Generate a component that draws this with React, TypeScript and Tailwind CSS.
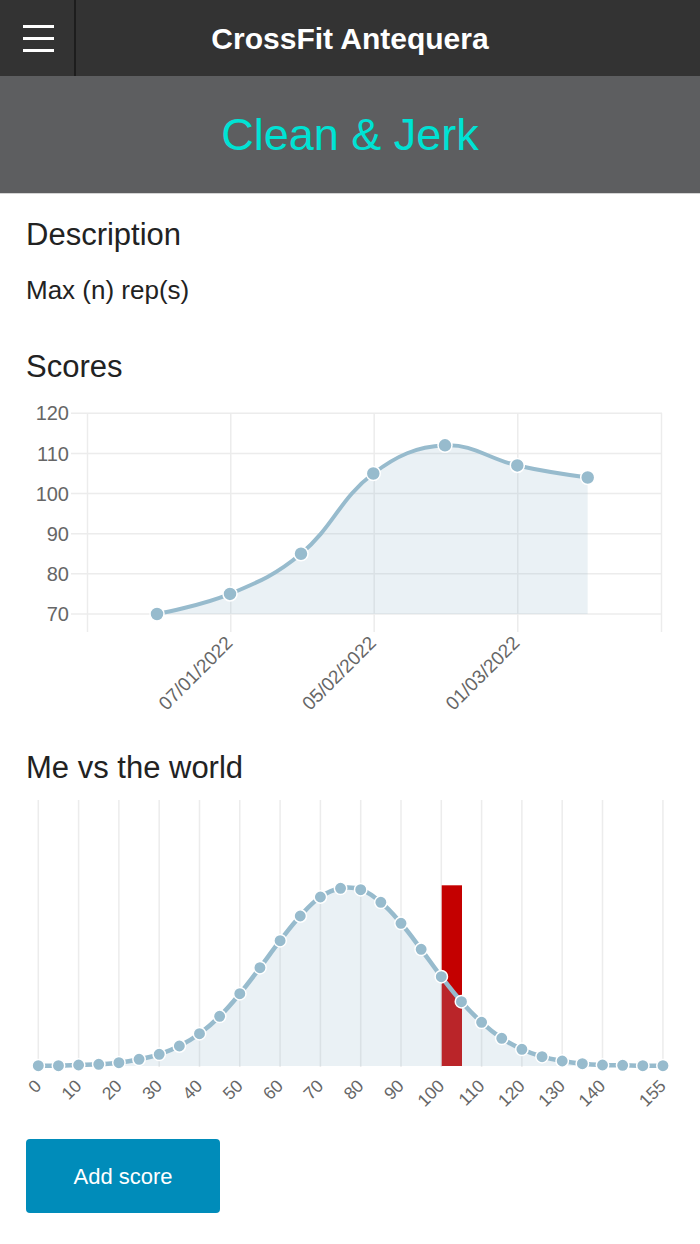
import React from "react";

type P = [number, number];

function splinePath(points: P[], t = 0.4, minY = 0, maxY = 10000): string {
  const cps = points.map((p, i) => {
    if (i === 0 || i === points.length - 1) return { a: p, b: p };
    const p0 = points[i - 1];
    const p2 = points[i + 1];
    const d01 = Math.hypot(p[0] - p0[0], p[1] - p0[1]);
    const d12 = Math.hypot(p2[0] - p[0], p2[1] - p[1]);
    const fa = (t * d01) / (d01 + d12);
    const fb = (t * d12) / (d01 + d12);
    const cy = (y: number) => Math.min(maxY, Math.max(minY, y));
    return {
      a: [p[0] - fa * (p2[0] - p0[0]), cy(p[1] - fa * (p2[1] - p0[1]))] as P,
      b: [p[0] + fb * (p2[0] - p0[0]), cy(p[1] + fb * (p2[1] - p0[1]))] as P,
    };
  });
  let d = `M${points[0][0]},${points[0][1]}`;
  for (let i = 1; i < points.length; i++) {
    const c1 = cps[i - 1].b;
    const c2 = cps[i].a;
    const p = points[i];
    d += ` C${c1[0]},${c1[1]} ${c2[0]},${c2[1]} ${p[0]},${p[1]}`;
  }
  return d;
}

const LINE = "#97bbcd";
const FILL = "rgba(151,187,205,0.2)";
const GRID = "#ececec";
const FONT = "'Liberation Sans', Arial, sans-serif";

function ScoresChart() {
  const y = (v: number) => 614 - (v - 70) * 4.015;
  const vals = [70, 75, 85, 105, 112, 107, 104];
  const xs = [157, 230, 301, 373.3, 445, 517.3, 587.7];
  const pts: P[] = vals.map((v, i) => [xs[i], y(v)]);
  const line = splinePath(pts, 0.4, 413, 614);
  const area = `${line} L${pts[pts.length - 1][0]},614 L${pts[0][0]},614 Z`;
  const yTicks = [120, 110, 100, 90, 80, 70];
  const xGrid = [87.5, 230.8, 374.2, 517.8, 661.5];
  const xLabels: [number, string][] = [
    [230.8, "07/01/2022"],
    [374.2, "05/02/2022"],
    [517.8, "01/03/2022"],
  ];
  return (
    <svg width={700} height={365} viewBox="0 385 700 365" className="block">
      {yTicks.map((v) => (
        <line key={v} x1={71} x2={662} y1={y(v)} y2={y(v)} stroke={GRID} strokeWidth={1.5} />
      ))}
      {xGrid.map((x) => (
        <line key={x} x1={x} x2={x} y1={413} y2={632} stroke={GRID} strokeWidth={1.5} />
      ))}
      {yTicks.map((v) => (
        <text
          key={v}
          x={69}
          y={y(v)}
          dy="0.36em"
          textAnchor="end"
          fontFamily={FONT}
          fontSize={20}
          fill="#666"
        >
          {v}
        </text>
      ))}
      {xLabels.map(([x, s]) => (
        <text
          key={s}
          transform={`translate(${x + 3},644) rotate(-45)`}
          textAnchor="end"
          fontFamily={FONT}
          fontSize={19}
          fill="#666"
        >
          {s}
        </text>
      ))}
      <path d={area} fill={FILL} />
      <path d={line} fill="none" stroke={LINE} strokeWidth={4} />
      {pts.map((p, i) => (
        <circle key={i} cx={p[0]} cy={p[1]} r={7} fill={LINE} stroke="#fff" strokeWidth={1.5} />
      ))}
    </svg>
  );
}

function WorldChart() {
  const ys = [
    1065.7, 1065.7, 1065, 1064.3, 1062.7, 1059.3, 1054.3, 1046, 1033.7, 1016.3, 993.7, 967.7,
    940.7, 916, 897, 888.3, 889.7, 902.3, 923.3, 949.3, 976.7, 1001.7, 1022.3, 1038.3, 1049.3,
    1056.7, 1061, 1063.7, 1065, 1065.3, 1065.7, 1065.7,
  ];
  const x = (v: number) => 38.3 + v * 4.03;
  const pts: P[] = ys.map((yy, i) => [x(i * 5), yy]);
  const base = 1066;
  const line = splinePath(pts, 0.4, 800, base);
  const area = `${line} L${pts[pts.length - 1][0]},${base} L${pts[0][0]},${base} Z`;
  const labels = [0, 10, 20, 30, 40, 50, 60, 70, 80, 90, 100, 110, 120, 130, 140, 155];
  return (
    <svg width={700} height={334} viewBox="0 786 700 334" className="block">
      {labels.map((v) => (
        <line key={v} x1={x(v)} x2={x(v)} y1={800} y2={1067} stroke={GRID} strokeWidth={1.5} />
      ))}
      {labels.map((v) => (
        <text
          key={v}
          transform={`translate(${x(v) + 4},1087) rotate(-45)`}
          textAnchor="end"
          fontFamily={FONT}
          fontSize={17.5}
          fill="#666"
        >
          {v}
        </text>
      ))}
      <rect x={441.7} y={885.3} width={20.3} height={base - 885.3} fill="#c40000" />
      <path d={area} fill={FILL} />
      <path d={line} fill="none" stroke={LINE} strokeWidth={4.5} />
      {pts.map((p, i) => (
        <circle key={i} cx={p[0]} cy={p[1]} r={6.2} fill={LINE} stroke="#fff" strokeWidth={1.5} />
      ))}
    </svg>
  );
}

export default function App() {
  return (
    <div className="w-[700px] bg-white text-[#222] font-['Liberation_Sans',Arial,sans-serif]">
      <header className="grid h-[76px] grid-cols-[76px_1fr_76px] bg-[#333333]">
        <button className="flex h-full flex-col justify-center gap-[9px] border-r-2 border-[#1d1d1d] pl-[23px]">
          <span className="block h-[3px] w-[31px] bg-white" />
          <span className="block h-[3px] w-[31px] bg-white" />
          <span className="block h-[3px] w-[31px] bg-white" />
        </button>
        <div className="flex items-center justify-center text-[30px] font-bold text-white">
          CrossFit Antequera
        </div>
        <div />
      </header>
      <div className="flex h-[118px] items-center justify-center border-b border-[#d4d4d4] bg-[#5d5e60]">
        <h1 className="text-[45px] leading-none text-[#00e2d4]">Clean &amp; Jerk</h1>
      </div>
      <main className="pb-[31px]">
        <h2 className="mt-[23px] px-[26px] text-[31px] leading-[36px]">Description</h2>
        <p className="mt-[22px] px-[26px] text-[26px] leading-[30px]">Max (n) rep(s)</p>
        <h2 className="mt-[44px] px-[26px] text-[31px] leading-[36px]">Scores</h2>
        <ScoresChart />
        <h2 className="px-[26px] text-[31px] leading-[36px]">Me vs the world</h2>
        <WorldChart />
        <div className="mt-[19px] px-[26px]">
          <button className="flex h-[74px] w-[194px] items-center justify-center rounded-[4px] bg-[#008cba] text-[22px] text-white">
            Add score
          </button>
        </div>
      </main>
    </div>
  );
}
